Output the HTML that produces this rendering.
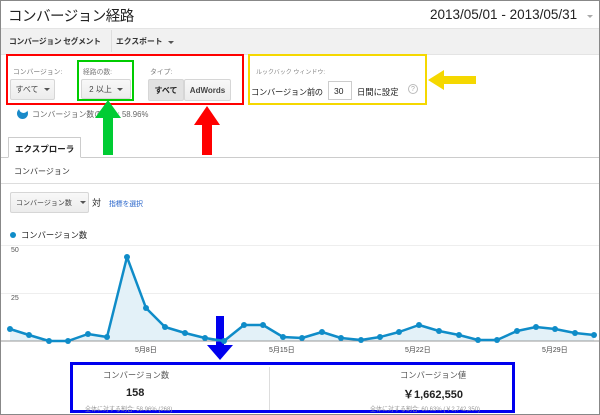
<!DOCTYPE html>
<html><head><meta charset="utf-8"><style>
*{margin:0;padding:0;box-sizing:border-box}
body{width:600px;height:415px;position:relative;overflow:hidden;background:#fff;font-family:"Liberation Sans","Noto Sans CJK JP",sans-serif;color:#222}
.a{position:absolute;white-space:nowrap}
.btn{position:absolute;border:1px solid #d6d6d6;border-radius:2px;background:linear-gradient(#f8f8f8,#ececec);font-size:8px;color:#444;display:flex;align-items:center;justify-content:center;white-space:nowrap}
.tri{display:inline-block;border-left:3px solid transparent;border-right:3px solid transparent;border-top:3px solid #555;margin-left:5px}
</style></head><body>
<div class="a" style="left:0;top:0;width:600px;height:415px;border:1px solid #888"></div>
<div class="a" style="left:8px;top:5px;font-size:14.5px;letter-spacing:-0.5px;color:#222">コンバージョン経路</div>
<div class="a" style="left:430px;top:7px;font-size:13.5px;color:#222">2013/05/01 - 2013/05/31</div>
<div class="a" style="left:587px;top:15px;border-left:3px solid transparent;border-right:3px solid transparent;border-top:3px solid #aaa"></div>
<div class="a" style="left:1px;top:28px;width:598px;height:27px;background:#f1f1f1;border-top:1px solid #e4e4e4;border-bottom:1px solid #e4e4e4"></div>
<div class="a" style="left:9px;top:36px;font-size:7.8px;font-weight:bold;color:#333;letter-spacing:-0.3px">コンバージョン セグメント</div>
<div class="a" style="left:111px;top:30px;width:1px;height:22px;background:#ddd"></div>
<div class="a" style="left:116px;top:36px;font-size:7.8px;font-weight:bold;color:#333">エクスポート<span class="tri"></span></div>
<div class="a" style="left:6px;top:54px;width:238px;height:51px;border:2px solid #f00"></div>
<div class="a" style="left:77px;top:60px;width:57px;height:41px;border:2px solid #0c0"></div>
<div class="a" style="left:248px;top:54px;width:179px;height:51px;border:2px solid #f5d800"></div>
<div class="a" style="left:13px;top:66px;font-size:6.8px;color:#777">コンバージョン:</div>
<div class="a" style="left:83px;top:66px;font-size:6.8px;color:#777">経路の数:</div>
<div class="a" style="left:150px;top:66px;font-size:6.8px;color:#777">タイプ:</div>
<div class="a" style="left:256px;top:67px;font-size:6px;color:#888">ルックバック ウィンドウ:</div>
<div class="btn" style="left:10px;top:79px;width:45px;height:21px">すべて<span class="tri"></span></div>
<div class="btn" style="left:81px;top:79px;width:50px;height:20px">2 以上<span class="tri"></span></div>
<div class="btn" style="left:148px;top:79px;width:36px;height:22px;background:#e2e2e2;font-weight:bold;color:#222">すべて</div>
<div class="btn" style="left:184px;top:79px;width:47px;height:22px;font-weight:bold">AdWords</div>
<div class="a" style="left:251px;top:86px;font-size:8.3px;letter-spacing:-0.3px;color:#222">コンバージョン前の</div>
<div class="a" style="left:328px;top:81px;width:24px;height:19px;border:1px solid #ccc;background:#fff;font-size:8.5px;padding:4px 0 0 5px">30</div>
<div class="a" style="left:357px;top:86px;font-size:8.3px;color:#222">日間に設定</div>
<div class="a" style="left:408px;top:84px;width:10px;height:10px;border:1px solid #bbb;border-radius:50%;font-size:7px;color:#aaa;text-align:center;line-height:9px">?</div>
<div class="a" style="left:17px;top:108px;width:11px;height:11px;border-radius:50%;background:#1a8ac9"></div>
<div class="a" style="left:19px;top:107px;width:9px;height:6px;background:#fff;border-radius:0 0 6px 6px"></div>
<div class="a" style="left:32px;top:109px;font-size:7.8px;color:#666">コンバージョン数の割合: 58.96%</div>
<svg class="a" style="left:0;top:0" width="600" height="415">
<polygon points="108,100 95,118 103,118 103,155 113,155 113,118 121,118" fill="#00cc33"/>
<polygon points="207,106 194,125 202,125 202,155 212,155 212,125 220,125" fill="#ff0000"/>
<polygon points="428,80 444,70 444,76 476,76 476,84 444,84 444,90" fill="#f5d800"/>
<polygon points="216,316 224,316 224,345 233,345 220,360 207,345 216,345" fill="#0000ee"/>
</svg>
<div class="a" style="left:1px;top:157px;width:598px;height:1px;background:#ccc"></div>
<div class="a" style="left:8px;top:137px;width:73px;height:21px;border:1px solid #ccc;border-bottom:1px solid #fff;background:#fff;font-size:8.5px;font-weight:bold;padding:5px 0 0 6px">エクスプローラ</div>
<div class="a" style="left:14px;top:166px;font-size:8px;color:#333">コンバージョン</div>
<div class="a" style="left:1px;top:183px;width:598px;height:1px;background:#ddd"></div>
<div class="btn" style="left:10px;top:192px;width:79px;height:21px;font-size:7px;justify-content:flex-start;padding-left:5px">コンバージョン数<span class="tri" style="margin-left:8px"></span></div>
<div class="a" style="left:92px;top:196px;font-size:9px">対</div>
<div class="a" style="left:109px;top:198px;font-size:6.8px;color:#2361c9">指標を選択</div>
<div class="a" style="left:10px;top:232px;width:6px;height:6px;border-radius:50%;background:#0f8cc8"></div>
<div class="a" style="left:21px;top:229px;font-size:8.3px;color:#222">コンバージョン数</div>
<div class="a" style="left:1px;top:245px;width:598px;height:1px;background:#eee"></div>
<div class="a" style="left:1px;top:293px;width:598px;height:1px;background:#eee"></div>
<div class="a" style="left:11px;top:247px;font-size:7px;color:#555">50</div>
<div class="a" style="left:11px;top:295px;font-size:7px;color:#555">25</div>
<svg class="a" style="left:0;top:0" width="600" height="415">
<polygon fill="#e3f1f8" points="10,341 10,329 29,335 49,341 68,341 88,334 107,337 127,257 146,308 165,327 185,333 205,338 224,341 244,325 263,325 283,337 302,338 322,332 341,338 361,340 380,337 399,332 419,325 439,331 459,335 478,340 497,340 517,331 536,327 555,329 575,333 594,335 594,341"/>
<line x1="1" y1="341" x2="599" y2="341" stroke="#999" stroke-width="1"/>
<polyline fill="none" stroke="#0f8cc8" stroke-width="2.5" stroke-linejoin="round" points="10,329 29,335 49,341 68,341 88,334 107,337 127,257 146,308 165,327 185,333 205,338 224,341 244,325 263,325 283,337 302,338 322,332 341,338 361,340 380,337 399,332 419,325 439,331 459,335 478,340 497,340 517,331 536,327 555,329 575,333 594,335"/>
<g fill="#0f8cc8">
<circle cx="10" cy="329" r="3"/><circle cx="29" cy="335" r="3"/><circle cx="49" cy="341" r="3"/><circle cx="68" cy="341" r="3"/><circle cx="88" cy="334" r="3"/><circle cx="107" cy="337" r="3"/><circle cx="127" cy="257" r="3"/><circle cx="146" cy="308" r="3"/><circle cx="165" cy="327" r="3"/><circle cx="185" cy="333" r="3"/><circle cx="205" cy="338" r="3"/><circle cx="224" cy="341" r="3"/><circle cx="244" cy="325" r="3"/><circle cx="263" cy="325" r="3"/><circle cx="283" cy="337" r="3"/><circle cx="302" cy="338" r="3"/><circle cx="322" cy="332" r="3"/><circle cx="341" cy="338" r="3"/><circle cx="361" cy="340" r="3"/><circle cx="380" cy="337" r="3"/><circle cx="399" cy="332" r="3"/><circle cx="419" cy="325" r="3"/><circle cx="439" cy="331" r="3"/><circle cx="459" cy="335" r="3"/><circle cx="478" cy="340" r="3"/><circle cx="497" cy="340" r="3"/><circle cx="517" cy="331" r="3"/><circle cx="536" cy="327" r="3"/><circle cx="555" cy="329" r="3"/><circle cx="575" cy="333" r="3"/><circle cx="594" cy="335" r="3"/>
</g></svg>
<div class="a" style="left:135px;top:345px;font-size:7px;color:#444">5月8日</div>
<div class="a" style="left:269px;top:345px;font-size:7px;color:#444">5月15日</div>
<div class="a" style="left:405px;top:345px;font-size:7px;color:#444">5月22日</div>
<div class="a" style="left:542px;top:345px;font-size:7px;color:#444">5月29日</div>
<div class="a" style="left:269px;top:367px;width:1px;height:46px;background:#ddd"></div>
<div class="a" style="left:70px;top:362px;width:445px;height:51px;border:3px solid #0000ee"></div>
<div class="a" style="left:103px;top:369px;font-size:8.3px;color:#555">コンバージョン数</div>
<div class="a" style="left:126px;top:387px;font-size:11px;font-weight:bold">158</div>
<div class="a" style="left:85px;top:404px;font-size:6px;color:#999">全体に対する割合: 58.96% (268)</div>
<div class="a" style="left:400px;top:369px;font-size:8.3px;color:#555">コンバージョン値</div>
<div class="a" style="left:403px;top:386px;font-size:11px;font-weight:bold">￥1,662,550</div>
<div class="a" style="left:370px;top:404px;font-size:6px;color:#999">全体に対する割合: 60.63% (￥2,742,350)</div>
</body></html>
